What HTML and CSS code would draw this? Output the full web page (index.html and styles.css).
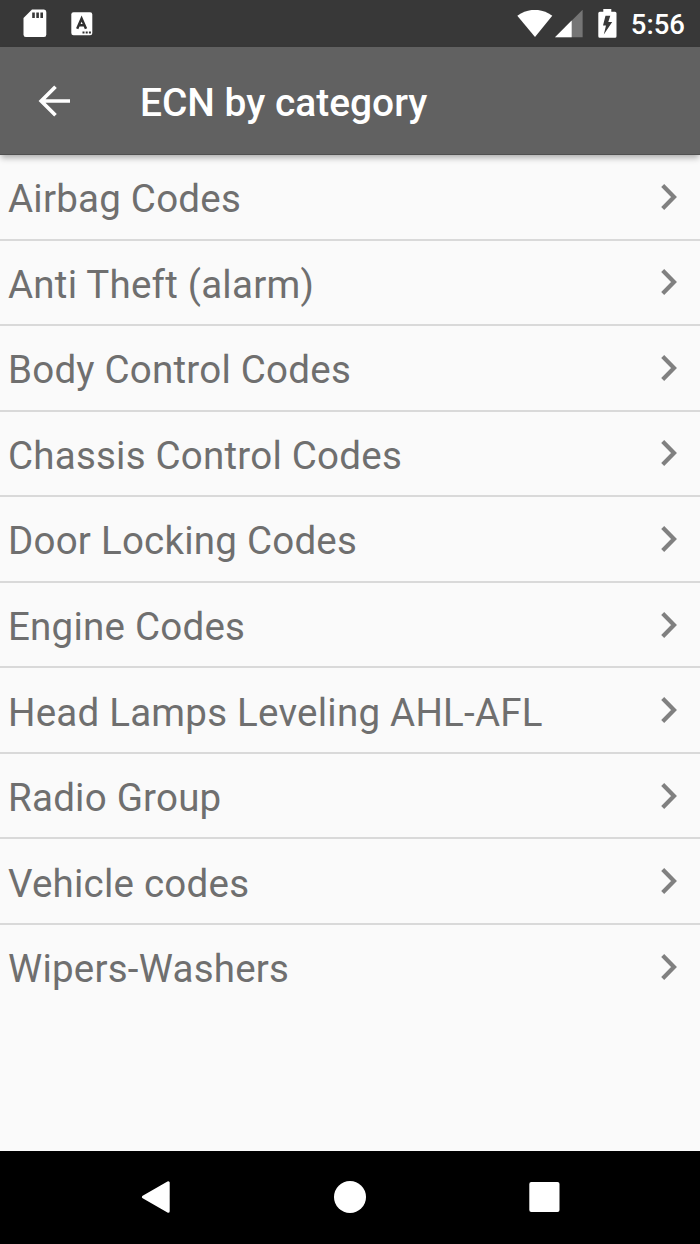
FILE: index.html
```
<!DOCTYPE html>
<html lang="en">
<head>
  <meta charset="UTF-8">
  <meta name="viewport" content="width=device-width, initial-scale=1">
  <title>ECN by category</title>
  <link rel="stylesheet" href="styles.css">
</head>
<body>
  <!-- icon shared by all rows -->
  <svg class="defs">
    <symbol id="chevron" viewBox="0 0 18 28">
      <path d="M2.7 2.6 L14 14 L2.7 25.4" fill="none" stroke="#808080" stroke-width="4.2"/>
    </symbol>
  </svg>

  <div class="status-bar">
    <svg class="icon-sd" width="24" height="30" viewBox="0 0 24 30">
      <path d="M9 .4 H21 Q23.3 .4 23.3 2.9 V25.6 Q23.3 28.1 21 28.1 H2.8 Q.5 28.1 .5 25.6 V9 Z" fill="#fff"/>
      <path d="M9.2 3.6h2.6v5.5H9.2zM13.3 3.6h2.6v5.5h-2.6zM17.4 3.6H20v5.5h-2.6z" fill="#383838"/>
    </svg>
    <svg class="icon-keyboard" width="22" height="24" viewBox="0 0 22 24">
      <rect x=".3" y=".2" width="21" height="23" rx="2.2" fill="#fff"/>
      <path d="M6.2 16.8 L10.6 6.6 L15 16.8 M7.8 13.2 H13.4" fill="none" stroke="#303030" stroke-width="2.5"/>
      <path d="M11.5 19.4h2v2h-2zM14.7 19.4h2v2h-2zM17.9 19.4h2v2h-2z" fill="#303030"/>
    </svg>
    <svg class="icon-wifi" width="36" height="28" viewBox="0 0 36 28">
      <path d="M.3 5.7 Q17.8 -6.1 35.3 5.7 L18 27 Z" fill="#fff"/>
    </svg>
    <svg class="icon-signal" width="28" height="28" viewBox="0 0 28 28">
      <path d="M27.6 -.3 V27.2 H0 Z" fill="#757575"/>
      <path d="M16.7 10.6 V27.2 H0 Z" fill="#fff"/>
    </svg>
    <svg class="icon-battery" width="19" height="29" viewBox="0 0 19 29">
      <path d="M5.3 0 H13.3 V2.7 H17 Q18.5 2.7 18.5 4.2 V27.2 Q18.5 28.7 17 28.7 H1.8 Q.3 28.7 .3 27.2 V4.2 Q.3 2.7 1.8 2.7 H5.3 Z" fill="#fff"/>
      <path d="M7.5 6.8 H12.3 L10.3 13 H14.2 L5.8 25.5 L8 16.5 H5 Z" fill="#383838"/>
    </svg>
    <span class="clock">5:56</span>
  </div>

  <header class="app-bar">
    <svg class="icon-back" width="34" height="34" viewBox="0 0 34 34">
      <path d="M32 17 H4 M17.5 2.7 L3.2 17 L17.5 31.3" fill="none" stroke="#fff" stroke-width="3.7"/>
    </svg>
    <h1>ECN by category</h1>
  </header>

  <ul class="categories">
    <li><span>Airbag Codes</span><svg class="chevron"><use href="#chevron"/></svg></li>
    <li><span>Anti Theft (alarm)</span><svg class="chevron"><use href="#chevron"/></svg></li>
    <li><span>Body Control Codes</span><svg class="chevron"><use href="#chevron"/></svg></li>
    <li><span>Chassis Control Codes</span><svg class="chevron"><use href="#chevron"/></svg></li>
    <li><span>Door Locking Codes</span><svg class="chevron"><use href="#chevron"/></svg></li>
    <li><span>Engine Codes</span><svg class="chevron"><use href="#chevron"/></svg></li>
    <li><span>Head Lamps Leveling AHL-AFL</span><svg class="chevron"><use href="#chevron"/></svg></li>
    <li><span>Radio Group</span><svg class="chevron"><use href="#chevron"/></svg></li>
    <li><span>Vehicle codes</span><svg class="chevron"><use href="#chevron"/></svg></li>
    <li><span>Wipers-Washers</span><svg class="chevron"><use href="#chevron"/></svg></li>
  </ul>

  <nav class="nav-bar">
    <svg width="32" height="34" viewBox="0 0 32 34">
      <path d="M3.4 17 L28.2 2.8 V31.2 Z" fill="#fff" stroke="#fff" stroke-width="3" stroke-linejoin="round"/>
    </svg>
    <svg width="32" height="34" viewBox="0 0 32 34">
      <circle cx="16" cy="17" r="16" fill="#fff"/>
    </svg>
    <svg width="32" height="34" viewBox="0 0 32 34">
      <rect x="1.3" y="1.9" width="30.2" height="30.2" rx="2" fill="#fff"/>
    </svg>
  </nav>
</body>
</html>
```

FILE: styles.css
```
* {
  box-sizing: border-box;
}
body {
  display: flex;
  flex-direction: column;
  height: 1244px;
  margin: 0;
  background-color: #fafafa;
  font-family: Roboto, sans-serif;
}
svg {
  display: block;
  flex-shrink: 0;
}
.defs {
  display: none;
}

/* top of the screen */
.status-bar {
  display: flex;
  align-items: center;
  height: 47px;
  padding: 0 15px 0 23px;
  background-color: #383838;
  color: white;
}
.icon-keyboard {
  margin-left: 24px;
}
.icon-wifi {
  margin-left: auto;
}
.icon-signal {
  margin-left: 2px;
}
.icon-battery {
  margin-left: 15px;
}
.clock {
  margin-left: 14px;
  padding-top: 2px;
  font-size: 27.5px;
  font-weight: 500;
  line-height: 32px;
}
.app-bar {
  display: flex;
  align-items: center;
  height: 108px;
  padding-left: 38px;
  background-color: #616161;
  border-bottom: 1px solid #505050;
  box-shadow: 0 4px 6px -1px rgba(0, 0, 0, 0.3);
  color: white;
}
.app-bar h1 {
  margin: 0 0 0 68px;
  padding-top: 5px;
  font-size: 38.9px;
  font-weight: 500;
  line-height: 46px;
}

/* category list */
.categories {
  flex: 1;
  margin: 0;
  padding: 0;
  list-style: none;
}
.categories li {
  display: flex;
  align-items: center;
  justify-content: space-between;
  height: 85.55px;
  padding: 0 22px 0 8px;
  border-bottom: 2px solid #d9d9d9;
  color: #6f6f6f;
  font-size: 38.5px;
  letter-spacing: 0.23px;
}
.categories li:last-child {
  border-color: transparent;
}
.categories span {
  padding-top: 4px;
}
.chevron {
  width: 18px;
  height: 28px;
}

/* system buttons */
.nav-bar {
  display: flex;
  align-items: center;
  justify-content: center;
  gap: 162px;
  height: 93px;
  padding-bottom: 1px;
  background-color: black;
}
```
